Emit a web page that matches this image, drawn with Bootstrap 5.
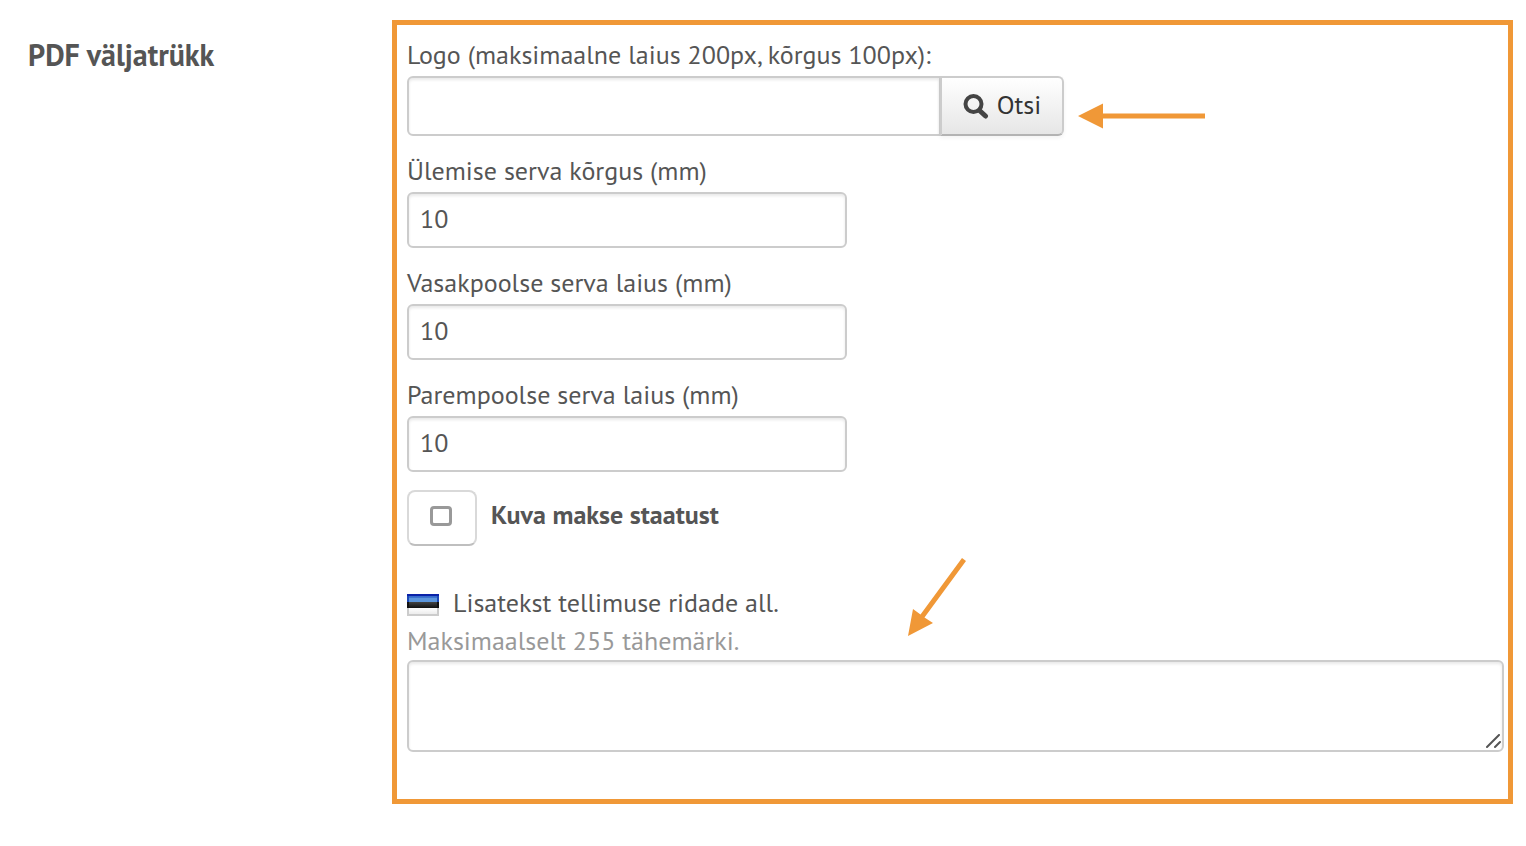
<!DOCTYPE html>
<html lang="et">
<head>
<meta charset="utf-8">
<meta name="viewport" content="width=device-width, initial-scale=1">
<title>PDF väljatrükk</title>
<link href="https://cdn.jsdelivr.net/npm/bootstrap@5.3.0/dist/css/bootstrap.min.css" rel="stylesheet">
<style>
body { font-family: "PT Sans", "Noto Sans", sans-serif; font-size: 26px; color: #555; background: #fff; }
.page { padding: 20px 13px 20px 28px; }
.side { flex: 0 0 364px; }
.side h1 { font-size: 30px; line-height: 38px; font-weight: 700; margin: 16px 0 0; }
.frame { border: 5px solid #f09837; padding: 11px 4px 47px 10px; }
.line { display: block; line-height: 38px; margin: 0; }
.group { margin-bottom: 16px; }
.group .line { padding-bottom: 2px; }
.form-control { font-size: 26px; line-height: 36px; color: #555; border: 2px solid #ccc; border-radius: 6px; padding: 6px 11px 10px; height: 56px; box-shadow: inset 0 2px 3px rgba(0,0,0,.09); }
.narrow { max-width: 440px; }
.search { max-width: 657px; }
.search .form-control { height: 60px; }
.search .input-group > .btn { width: 124px; margin-left: -2px; font-size: 26px; line-height: 36px; color: #333; padding: 0 0 2px; border: 2px solid #ccc; border-bottom-color: #b3b3b3; border-radius: 0 6px 6px 0; background: linear-gradient(#fff, #e6e6e6); box-shadow: 0 2px 4px rgba(0,0,0,.05); }
.status { margin-top: 18px; line-height: 38px; gap: 14px; }
.status strong { padding-top: 6px; }
.tick { width: 70px; height: 56px; border: 2px solid #d9d9d9; border-bottom-color: #bfbfbf; border-radius: 8px; padding: 0 3px 4px 0; }
.tick input { appearance: none; width: 22px; height: 20px; margin: 0; border: 3px solid #999; border-radius: 4px; background: #fff; }
.tick input:checked { background: #999; }
.extra { margin-top: 38px; }
.flagged { gap: 14px; }
.hint { color: #999; }
.area { position: relative; }
.area textarea.form-control { height: 92px; resize: none; display: block; }
.grip { position: absolute; right: 2px; bottom: 2px; }
.arrow-left { position: absolute; left: 100%; top: 27px; margin-left: 14px; }
.arrow-down { position: absolute; left: 501px; bottom: 100%; margin-bottom: 24px; }
</style>
</head>
<body>
<main class="container-fluid page">
  <div class="d-flex">
    <div class="side"><h1>PDF väljatrükk</h1></div>
    <form class="frame flex-grow-1">
      <div class="group">
        <label class="line" for="logo">Logo (maksimaalne laius 200px, kõrgus 100px):</label>
        <div class="search position-relative">
          <div class="input-group">
            <input class="form-control" id="logo" type="text">
            <button class="btn d-flex align-items-center justify-content-center gap-2" type="button">
              <svg class="mt-1" width="26" height="26" viewBox="0 0 26 26" fill="none" stroke="#444" aria-hidden="true"><circle cx="10.500" cy="10" r="8" stroke-width="4"/><path d="M16.500 16.500l6 5.500" stroke-width="5" stroke-linecap="round"/></svg>
              <span>Otsi</span>
            </button>
          </div>
          <svg class="arrow-left" width="128" height="26" viewBox="0 0 128 26" fill="#f09837" aria-hidden="true"><path d="M0 13L25 .5V10.500H127V15.500H25V25.500z"/></svg>
        </div>
      </div>
      <div class="group">
        <label class="line" for="top">Ülemise serva kõrgus (mm)</label>
        <input class="form-control narrow" id="top" type="text" value="10">
      </div>
      <div class="group">
        <label class="line" for="left">Vasakpoolse serva laius (mm)</label>
        <input class="form-control narrow" id="left" type="text" value="10">
      </div>
      <div class="group">
        <label class="line" for="right">Parempoolse serva laius (mm)</label>
        <input class="form-control narrow" id="right" type="text" value="10">
      </div>
      <label class="d-flex status">
        <span class="tick d-flex align-items-center justify-content-center"><input type="checkbox"></span>
        <strong>Kuva makse staatust</strong>
      </label>
      <div class="extra">
        <label class="line d-flex align-items-center flagged" for="text">
          <svg class="mt-1" width="32" height="22" viewBox="0 0 32 22" aria-hidden="true">
            <defs>
              <linearGradient id="blue" x2="0" y2="1"><stop stop-color="#2457c5"/><stop offset="1" stop-color="#5c96dc"/></linearGradient>
              <linearGradient id="black" x2="0" y2="1"><stop stop-color="#444"/><stop offset="1" stop-color="#111"/></linearGradient>
              <linearGradient id="white" x2="0" y2="1"><stop stop-color="#fff"/><stop offset="1" stop-color="#e6e6e6"/></linearGradient>
            </defs>
            <path fill="url(#blue)" d="M0 0h32v8H0z"/><path fill="url(#black)" d="M0 8h32v6H0z"/><path fill="url(#white)" d="M0 14h32v8H0z"/>
            <path fill="#5c96dc" d="M2 4h28v4H2z"/>
            <path fill="none" stroke="#0a22a8" stroke-width="2" d="M0 1h32"/><path fill="none" stroke="#1c48b8" stroke-width="2" d="M1 2v6M31 2v6"/><path fill="none" stroke="#111" stroke-width="2" d="M1 8v6M31 8v6"/><path fill="none" stroke="#ccc" stroke-width="2" d="M1 14v7h30v-7"/>
          </svg>
          <span>Lisatekst tellimuse ridade all.</span>
        </label>
        <div class="line hint">Maksimaalselt 255 tähemärki.</div>
        <div class="area">
          <textarea class="form-control" id="text"></textarea>
          <svg class="grip" width="16" height="16" viewBox="0 0 16 16" stroke="#555" stroke-width="2" stroke-linecap="round" aria-hidden="true"><path d="M1 13L13 1M9 13l5-5"/></svg>
          <svg class="arrow-down" width="58" height="78" viewBox="0 0 58 78" fill="#f09837" aria-hidden="true"><path d="M0 78L5 51L12.500 56.500L54 0L58 3L16.500 59.500L25 65z"/></svg>
        </div>
      </div>
    </form>
  </div>
</main>
<script src="https://cdn.jsdelivr.net/npm/bootstrap@5.3.0/dist/js/bootstrap.bundle.min.js"></script>
</body>
</html>
